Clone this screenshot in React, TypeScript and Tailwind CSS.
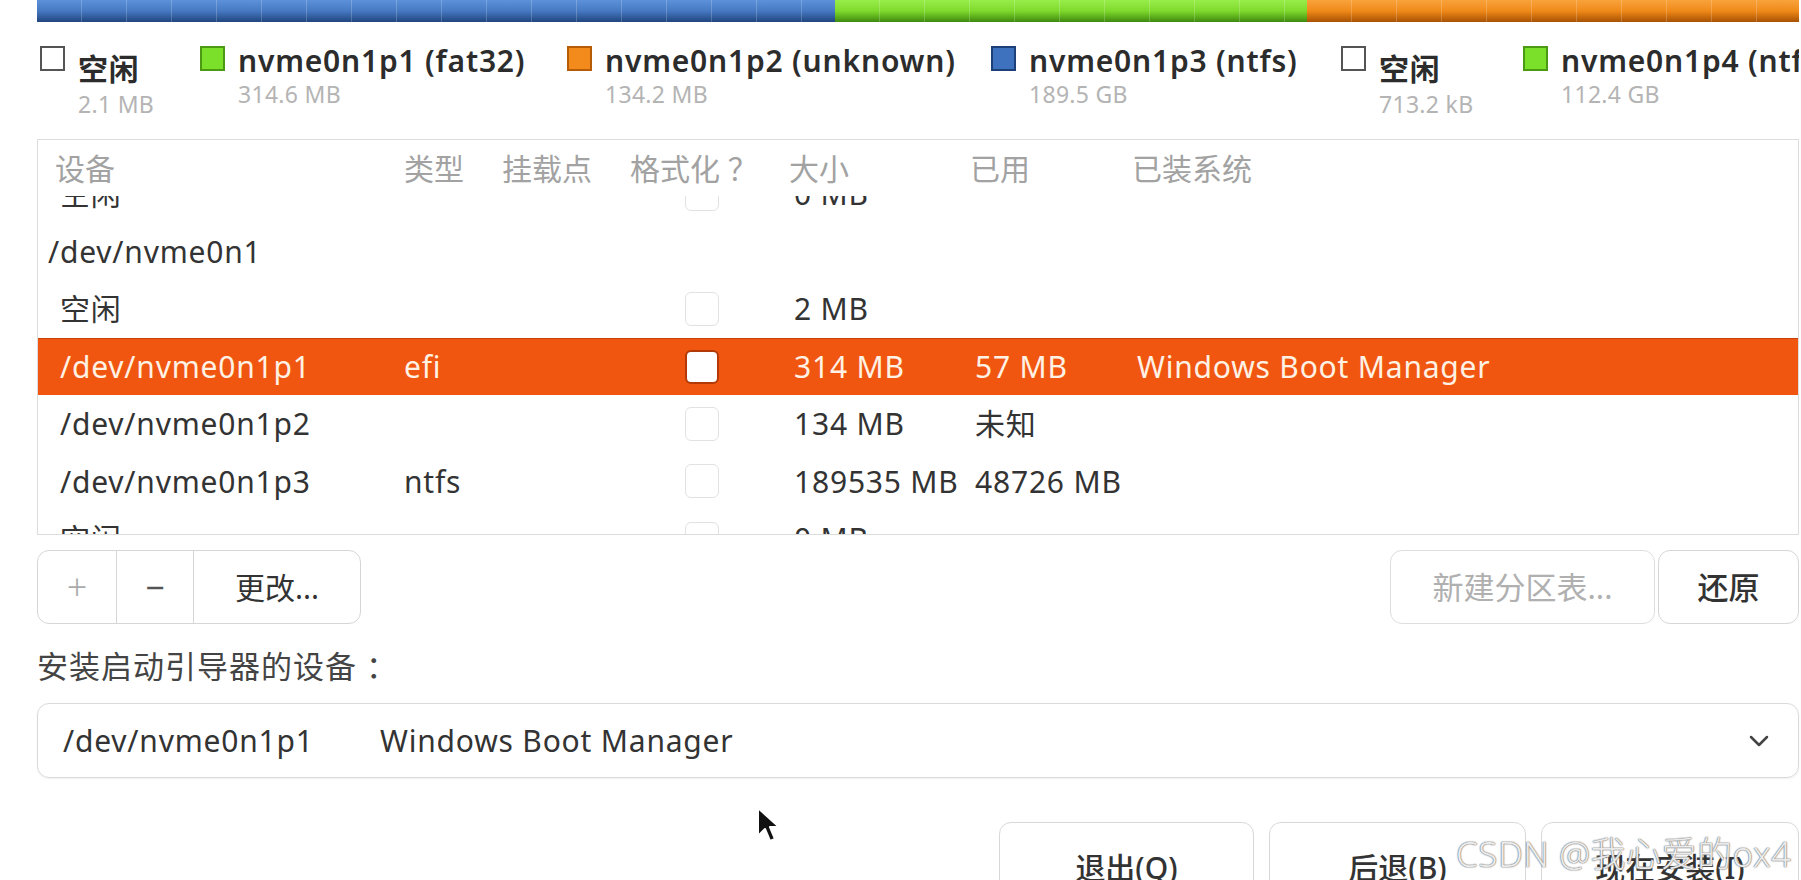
import React from 'react';

const FONT = { fontFamily: '"Noto Sans", "Noto Sans CJK SC", sans-serif' };

// one strip of the partition bar, with the light vertical tick lines
const BarSegment: React.FC<{ width: string; fill: string }> = ({ width, fill }) => (
  <div className={`relative h-full overflow-hidden ${width} ${fill}`}>
    <div className="flex h-full">
      {[...Array(24)].map((_, i) => (
        <div key={i} className="h-full w-[45px] shrink-0 border-r border-white/20"></div>
      ))}
    </div>
  </div>
);

const legend = [
  { box: 'bg-white border-[#555]', name: '空闲', size: '2.1 MB', w: 'w-[160px]', cjk: true },
  { box: 'bg-[#7ae02a] border-[#4c9a14]', name: 'nvme0n1p1 (fat32)', size: '314.6 MB', w: 'w-[367px]', cjk: false },
  { box: 'bg-[#f28a1c] border-[#b65c06]', name: 'nvme0n1p2 (unknown)', size: '134.2 MB', w: 'w-[424px]', cjk: false },
  { box: 'bg-[#3e72bf] border-[#1d4078]', name: 'nvme0n1p3 (ntfs)', size: '189.5 GB', w: 'w-[350px]', cjk: false },
  { box: 'bg-white border-[#555]', name: '空闲', size: '713.2 kB', w: 'w-[182px]', cjk: true },
  { box: 'bg-[#7ae02a] border-[#4c9a14]', name: 'nvme0n1p4 (ntfs)', size: '112.4 GB', w: 'w-[300px]', cjk: false },
];

type Row = {
  dev: string;
  type?: string;
  check?: boolean;
  size?: string;
  used?: string;
  sys?: string;
  selected?: boolean;
  disk?: boolean;
};

const rows: Row[] = [
  { dev: '空闲', check: true, size: '0 MB' },
  { dev: '/dev/nvme0n1', disk: true },
  { dev: '空闲', check: true, size: '2 MB' },
  { dev: '/dev/nvme0n1p1', type: 'efi', check: true, size: '314 MB', used: '57 MB', sys: 'Windows Boot Manager', selected: true },
  { dev: '/dev/nvme0n1p2', check: true, size: '134 MB', used: '未知' },
  { dev: '/dev/nvme0n1p3', type: 'ntfs', check: true, size: '189535 MB', used: '48726 MB' },
  { dev: '空闲', check: true, size: '0 MB' },
];

const COLS = 'grid grid-cols-[344px_103px_128px_159px_181px_162px_1fr] items-center';

const PartitionRow: React.FC<{ r: Row }> = ({ r }) => (
  <div
    className={`${COLS} h-[57.5px] pl-[22px] text-[30px] tracking-[0.8px] whitespace-nowrap ${
      r.selected ? 'bg-[#f0560f] text-[#fff1e4] border-t border-[#c8400a]' : 'text-[#333]'
    }`}
  >
    <div className={r.disk ? '-ml-[12px]' : ''}>{r.dev}</div>
    <div>{r.type}</div>
    <div></div>
    <div>
      {r.check && (
        <div
          className={`ml-[50px] h-[34px] w-[34px] rounded-[6px] border ${
            r.selected ? 'bg-white border-[#b33a06] border-2' : 'bg-white border-[#e2e2e2]'
          }`}
        ></div>
      )}
    </div>
    <div>{r.size}</div>
    <div>{r.used}</div>
    <div>{r.sys}</div>
  </div>
);

export default function App() {
  return (
    <div className="relative h-[880px] w-full overflow-hidden bg-white" style={FONT}>
      <div className="pl-[37px] pr-[2px]">
        {/* partition bar */}
        <div className="flex h-[22px] shadow-[inset_0_-3px_0_rgba(0,0,0,0.35)]">
          <BarSegment width="w-[798px]" fill="bg-linear-to-b from-[#5d92da] via-[#4679c2] to-[#21467f]" />
          <BarSegment width="w-[472px]" fill="bg-linear-to-b from-[#98ee4a] via-[#7fd92c] to-[#3f8a0f]" />
          <BarSegment width="flex-1" fill="bg-linear-to-b from-[#f8a33a] via-[#ef8a18] to-[#a95204]" />
        </div>

        {/* legend */}
        <div className="flex h-[117px] overflow-hidden pt-[24px] pl-[3px] whitespace-nowrap">
          {legend.map((l, i) => (
            <div key={i} className={`flex shrink-0 items-start ${l.w}`}>
              <div className={`h-[25px] w-[25px] shrink-0 border-2 ${l.box}`}></div>
              <div className={`ml-[13px] flex flex-col ${l.cjk ? 'pt-[8px]' : ''}`}>
                <span className="text-[30px] leading-[30px] tracking-[0.8px] font-semibold text-[#2c2c2c]">{l.name}</span>
                <span className={`text-[23px] leading-[28px] tracking-[0.3px] text-[#b4b4b4] ${l.cjk ? 'mt-[6px]' : 'mt-[4px]'}`}>{l.size}</span>
              </div>
            </div>
          ))}
        </div>

        {/* partition table */}
        <div className="flex h-[396px] flex-col overflow-hidden border border-[#dcdcdc] bg-white">
          <div className={`${COLS} relative z-10 h-[56px] shrink-0 bg-white pl-[17px] text-[30px] text-[#a2a2a2] whitespace-nowrap`}>
            <div>设备</div>
            <div className="pl-[5px]">类型</div>
            <div>挂载点</div>
            <div>格式化 ？</div>
            <div>大小</div>
            <div>已用</div>
            <div>已装系统</div>
          </div>
          <div className="flex-1 overflow-hidden">
            <div className="-mt-[31px]">
              {rows.map((r, i) => (
                <PartitionRow key={i} r={r} />
              ))}
            </div>
          </div>
        </div>

        {/* partition buttons */}
        <div className="mt-[15px] flex h-[74px] justify-between">
          <div className="flex overflow-hidden rounded-[12px] border border-[#d6d6d6] text-[30px]">
            <div className="flex w-[79px] items-center justify-center border-r border-[#d6d6d6] text-[36px] font-light text-[#aaa]">+</div>
            <div className="flex w-[77px] items-center justify-center border-r border-[#d6d6d6] text-[34px] text-[#555]">−</div>
            <div className="flex w-[166px] items-center justify-center text-[#333]">更改...</div>
          </div>
          <div className="flex gap-[3px] text-[31px]">
            <div className="flex w-[265px] items-center justify-center rounded-[12px] border border-[#dedede] text-[#b0b0b0]">新建分区表...</div>
            <div className="flex w-[141px] items-center justify-center rounded-[12px] border border-[#d6d6d6] font-medium text-[#333]">还原</div>
          </div>
        </div>

        {/* boot loader device */}
        <div className="mt-[24px] text-[31px] leading-[36px] tracking-[1px] text-[#444]">安装启动引导器的设备 ：</div>
        <div className="mt-[19px] flex h-[75px] items-center rounded-[12px] border border-[#dadada] pl-[25px] pr-[28px] text-[30px] tracking-[0.8px] text-[#333] shadow-[0_1px_2px_rgba(0,0,0,0.06)]">
          <span className="w-[317px]">/dev/nvme0n1p1</span>
          <span className="flex-1">Windows Boot Manager</span>
          <svg width="22" height="14" viewBox="0 0 22 14" fill="none" stroke="#444" strokeWidth="2.5" strokeLinecap="round" strokeLinejoin="round">
            <path d="M3 3 L11 11 L19 3" />
          </svg>
        </div>

        {/* dialog buttons */}
        <div className="mt-[44px] flex justify-end gap-[15px] text-[30px] font-medium text-[#333]">
          <div className="flex h-[80px] w-[255px] items-start justify-center rounded-[12px] border border-[#d8d8d8] pt-[22px]">退出(Q)</div>
          <div className="flex h-[80px] w-[257px] items-start justify-center rounded-[12px] border border-[#d8d8d8] pt-[22px]">后退(B)</div>
          <div className="flex h-[80px] w-[258px] items-start justify-center rounded-[12px] border border-[#d8d8d8] pt-[22px]">现在安装(I)</div>
        </div>
      </div>

      {/* mouse pointer */}
      <svg className="absolute left-[756px] top-[806px]" width="24" height="38" viewBox="0 0 24 38">
        <path d="M2 2 L2 30 L9 23 L14 35 L19 33 L14 21 L23 21 Z" fill="#111" stroke="#fff" strokeWidth="2" strokeLinejoin="round" />
      </svg>

      {/* watermark */}
      <div className="absolute left-[1456px] top-[828px] text-[35px] font-light tracking-[0.5px] text-white/85 [text-shadow:0_0_1px_#777,0_0_1px_#777,0_0_2px_#999] whitespace-nowrap">
        CSDN @我心爱的ox4
      </div>
    </div>
  );
}
